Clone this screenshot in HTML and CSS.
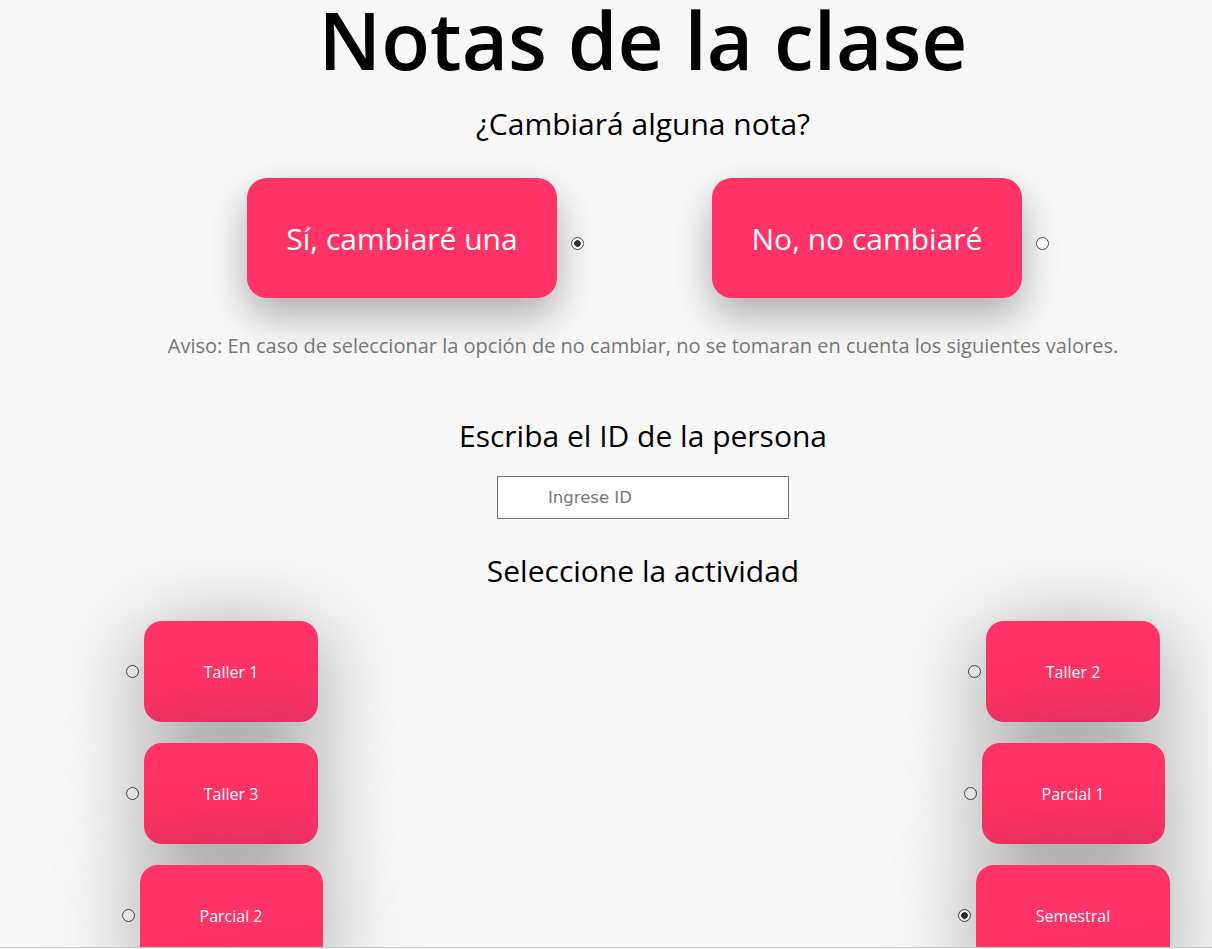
FILE: index.html
```html
<!DOCTYPE html>
<html lang="es">
<head>
<meta charset="utf-8">
<title>Notas de la clase</title>
<link rel="stylesheet" href="styles.css">
</head>
<body>
<main class="page">
  <h1 class="title">Notas de la clase</h1>
  <h2 class="question">¿Cambiará alguna nota?</h2>
  <div class="choices">
    <label class="choice">
      <span class="big-btn">Sí, cambiaré una</span>
      <input type="radio" name="cambio" class="radio" checked>
    </label>
    <label class="choice">
      <span class="big-btn">No, no cambiaré</span>
      <input type="radio" name="cambio" class="radio">
    </label>
  </div>
  <p class="notice">Aviso: En caso de seleccionar la opción de no cambiar, no se tomaran en cuenta los siguientes valores.</p>
  <h2 class="label-id">Escriba el ID de la persona</h2>
  <input type="text" class="id-input" placeholder="Ingrese ID">
  <h2 class="label-act">Seleccione la actividad</h2>
  <div class="activities">
    <div class="col">
      <label class="act"><input type="radio" name="act" class="radio"><span class="act-btn">Taller 1</span></label>
      <label class="act"><input type="radio" name="act" class="radio"><span class="act-btn">Taller 3</span></label>
      <label class="act"><input type="radio" name="act" class="radio"><span class="act-btn">Parcial 2</span></label>
    </div>
    <div class="spacer"></div>
    <div class="col">
      <label class="act"><input type="radio" name="act" class="radio"><span class="act-btn">Taller 2</span></label>
      <label class="act"><input type="radio" name="act" class="radio"><span class="act-btn">Parcial 1</span></label>
      <label class="act"><input type="radio" name="act" class="radio" checked><span class="act-btn">Semestral</span></label>
    </div>
  </div>
</main>
<div class="bottom-bar"></div>
</body>
</html>
```

FILE: styles.css
```css
html, body {
  margin: 0;
  padding: 0;
  background: #f8f8f8;
  overflow: hidden;
}
body {
  font-family: "Open Sans", "Noto Sans", sans-serif;
  color: #000;
  height: 949px;
}
.page {
  padding-left: 74px;
  display: flex;
  flex-direction: column;
  align-items: center;
  text-align: center;
}
.title {
  margin: 0;
  font-size: 80px;
  line-height: 78px;
  font-weight: 600;
}
.question {
  margin: 25px 0 0;
  font-size: 30px;
  line-height: 41px;
  font-weight: 400;
}
.choices {
  display: flex;
  gap: 128px;
  margin-top: 34px;
  padding-left: 10px;
}
.choice {
  display: flex;
  align-items: center;
}
.big-btn {
  width: 310px;
  height: 120px;
  border-radius: 20px;
  background: #ff3366;
  color: #fff;
  font-size: 30px;
  display: flex;
  align-items: center;
  justify-content: center;
  box-shadow: 0 18px 40px rgba(0, 0, 0, 0.3);
}
.radio {
  appearance: none;
  -webkit-appearance: none;
  width: 13px;
  height: 13px;
  margin: 0;
  border: 1px solid #4a4a4a;
  border-radius: 50%;
  background: #fff;
  box-sizing: border-box;
  flex: none;
}
.radio:checked {
  background: radial-gradient(circle, #333 0, #333 3px, #fff 3.6px);
}
.choice .radio {
  margin-left: 14px;
  margin-top: 10px;
}
.notice {
  margin: 30px 0 0;
  font-size: 20px;
  line-height: 36px;
  color: #777;
}
.label-id {
  margin: 51px 0 0;
  font-size: 30px;
  line-height: 41px;
  font-weight: 400;
}
.id-input {
  margin-top: 20px;
  width: 292px;
  height: 43px;
  box-sizing: border-box;
  border: 1px solid #777;
  background: #fff;
  padding: 0 0 0 50px;
  font-family: "DejaVu Sans", sans-serif;
  font-size: 16.5px;
  color: #333;
  outline: none;
}
.id-input::placeholder {
  color: #777;
}
.label-act {
  margin: 31px 0 0;
  font-size: 30px;
  line-height: 41px;
  font-weight: 400;
}
.activities {
  align-self: stretch;
  display: grid;
  grid-template-columns: 296px 1fr 296px;
  margin-top: 30px;
}
.col {
  display: flex;
  flex-direction: column;
  align-items: center;
  gap: 21px;
}
.act {
  display: flex;
  align-items: center;
}
.act .radio {
  margin-right: 5px;
}
.act-btn {
  height: 101px;
  padding: 0 60px;
  border-radius: 18px;
  background: linear-gradient(172deg, #ff3366 0%, #ff3366 60%, #f3356a 100%);
  color: #fff;
  font-size: 16px;
  display: flex;
  align-items: center;
  justify-content: center;
  box-shadow: 0 15px 90px rgba(0, 0, 0, 0.38);
}
.bottom-bar {
  position: fixed;
  left: 0;
  right: 0;
  bottom: 0;
  height: 1px;
  border-top: 1px solid #c9c9c9;
  background: #fff;
}
```
